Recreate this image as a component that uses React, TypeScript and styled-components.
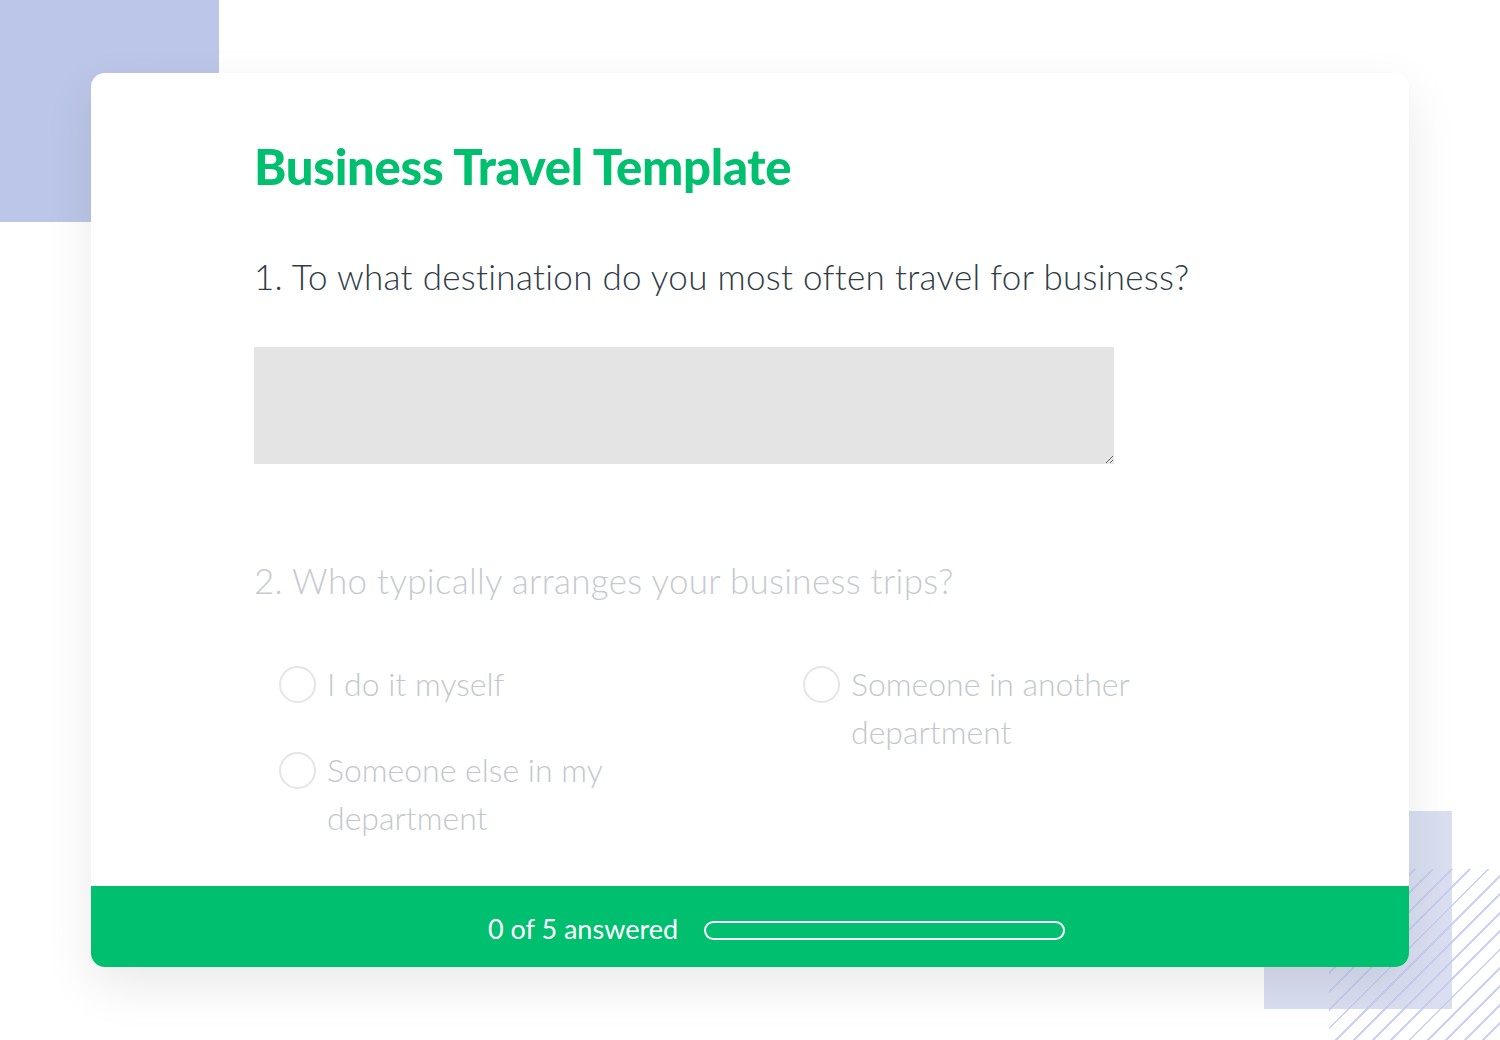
import React from "react";
import styled, { createGlobalStyle } from "styled-components";

const Global = createGlobalStyle`
  html, body { margin: 0; padding: 0; background: #ffffff; }
  body { font-family: "Lato", "Open Sans", sans-serif; }
  * { box-sizing: border-box; }
`;

const Page = styled.div`
  position: relative;
  width: 1500px;
  height: 1040px;
  overflow: hidden;
  background: #ffffff;
  padding: 73px 0 0 91px;
`;

const Deco = styled.div<{ $x: number; $y: number; $w: number; $h: number }>`
  position: absolute;
  left: ${(p) => p.$x}px;
  top: ${(p) => p.$y}px;
  width: ${(p) => p.$w}px;
  height: ${(p) => p.$h}px;
`;

const BlueBlock = styled(Deco)`
  background: #bcc6e8;
`;

const PaleBlock = styled(Deco)`
  background: rgba(196, 204, 234, 0.65);
`;

const Stripes = styled(Deco)`
  background: repeating-linear-gradient(
    -45deg,
    transparent 0px,
    transparent 11px,
    #ccd1f6 11px,
    #ccd1f6 13px
  );
`;

const Card = styled.div`
  position: relative;
  width: 1318px;
  height: 894px;
  background: #ffffff;
  border-radius: 14px;
  box-shadow: 0 18px 50px rgba(0, 0, 0, 0.09);
  display: flex;
  flex-direction: column;
  overflow: hidden;
`;

const Body = styled.div`
  flex: 1;
  min-height: 0;
  padding: 65px 0 0 163px;
  display: flex;
  flex-direction: column;
`;

const Title = styled.h1`
  margin: 0;
  font-family: "Lato", sans-serif;
  font-weight: 900;
  font-size: 49px;
  line-height: 56px;
  color: #00bf6f;
  letter-spacing: -0.3px;
`;

const Question = styled.div<{ $muted?: boolean }>`
  font-family: "Lato", sans-serif;
  font-weight: 300;
  font-size: 35px;
  letter-spacing: 0.3px;
  line-height: 44px;
  color: ${(p) => (p.$muted ? "#c6cacf" : "#2f3b45")};
`;

const Q1 = styled(Question)`
  margin-top: 60px;
`;

const Q2 = styled(Question)`
  margin-top: 94px;
`;

const TextArea = styled.textarea`
  margin-top: 49px;
  width: 860px;
  height: 117px;
  flex: none;
  background: #e4e4e4;
  border: none;
  outline: none;
  resize: both;
  display: block;
  padding: 10px;
  font-family: "Lato", sans-serif;
`;

const Options = styled.div`
  margin-top: 58px;
  margin-left: 25px;
  display: grid;
  grid-template-columns: 524px 340px;
`;

const Column = styled.div`
  display: flex;
  flex-direction: column;
  gap: 38px;
`;

const Option = styled.div`
  display: flex;
  align-items: flex-start;
  gap: 11px;
`;

const Radio = styled.span`
  flex: none;
  width: 37px;
  height: 37px;
  margin-top: 6px;
  border: 2px solid #e3e5e7;
  border-radius: 50%;
`;

const OptionText = styled.span`
  font-family: "Lato", sans-serif;
  font-weight: 300;
  font-size: 32px;
  line-height: 48px;
  color: #c3c7cc;
  max-width: 290px;
`;

const Footer = styled.div`
  flex: none;
  height: 81px;
  background: #00bf6f;
  display: flex;
  align-items: center;
  justify-content: center;
  gap: 26px;
  padding-left: 53px;
  padding-top: 4px;
`;

const Answered = styled.span`
  font-family: "Lato", sans-serif;
  font-weight: 400;
  font-size: 27px;
  color: #ffffff;
`;

const Progress = styled.div`
  width: 361px;
  height: 19px;
  border: 2px solid #ffffff;
  border-radius: 10px;
  margin-top: 3px;
`;

export default function App() {
  return (
    <>
      <Global />
      <Page>
        <BlueBlock $x={0} $y={0} $w={219} $h={222} />
        <Stripes $x={1329} $y={869} $w={171} $h={171} />
        <PaleBlock $x={1264} $y={811} $w={188} $h={198} />
        <Card>
          <Body>
            <Title>Business Travel Template</Title>
            <Q1>1. To what destination do you most often travel for business?</Q1>
            <TextArea aria-label="answer" />
            <Q2 $muted>2. Who typically arranges your business trips?</Q2>
            <Options>
              <Column>
                <Option>
                  <Radio />
                  <OptionText>I do it myself</OptionText>
                </Option>
                <Option>
                  <Radio />
                  <OptionText>Someone else in my department</OptionText>
                </Option>
              </Column>
              <Column>
                <Option>
                  <Radio />
                  <OptionText>Someone in another department</OptionText>
                </Option>
              </Column>
            </Options>
          </Body>
          <Footer>
            <Answered>0 of 5 answered</Answered>
            <Progress />
          </Footer>
        </Card>
      </Page>
    </>
  );
}
